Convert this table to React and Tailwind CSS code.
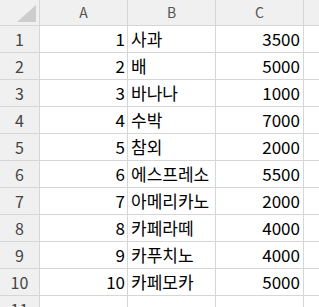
const rows = [
  [1, '사과', 3500],
  [2, '배', 5000],
  [3, '바나나', 1000],
  [4, '수박', 7000],
  [5, '참외', 2000],
  [6, '에스프레소', 5500],
  [7, '아메리카노', 2000],
  [8, '카페라떼', 4000],
  [9, '카푸치노', 4000],
  [10, '카페모카', 5000],
];

const font = { fontFamily: '"Noto Sans CJK KR", "Noto Sans", sans-serif' };

export default function App() {
  return (
    <div
      className="w-[319px] h-[307px] overflow-hidden bg-white"
      style={font}
    >
      <div className="grid grid-cols-[39px_87px_87px_87px_15px] grid-rows-[25px_repeat(11,26px)] gap-px bg-[#d6d6d6] pr-0">
        {/* corner */}
        <div className="bg-[#f0f0f0] relative">
          <svg width="39" height="25" className="absolute inset-0">
            <polygon points="36,5 36,22 17,22" fill="#cdcdcd" />
          </svg>
        </div>
        {['A', 'B', 'C', ''].map((c, i) => (
          <div
            key={i}
            className="bg-[#f0f0f0] flex items-center justify-center text-[14px] leading-[25px] text-[#555]"
          >
            {c}
          </div>
        ))}

        {rows.map(([n, name, price]) => (
          <Row key={n} n={n} name={name} price={price} />
        ))}

        {/* row 11, cut off */}
        <div className="bg-[#f0f0f0] text-center text-[16px] leading-[26px] text-[#444]">11</div>
        <div className="bg-white" />
        <div className="bg-white" />
        <div className="bg-white" />
        <div className="bg-white" />
      </div>
    </div>
  );
}

function Row({ n, name, price }) {
  return (
    <>
      <div className="bg-[#f0f0f0] text-center text-[16px] leading-[26px] text-[#444]">{n}</div>
      <div className="bg-white text-right pr-[2px] text-[17px] leading-[26px] text-black">{n}</div>
      <div className="bg-white pl-[3px] text-[17px] leading-[26px] text-black whitespace-nowrap overflow-visible">{name}</div>
      <div className="bg-white text-right pr-[3px] text-[17px] leading-[26px] text-black">{price}</div>
      <div className="bg-white" />
    </>
  );
}
